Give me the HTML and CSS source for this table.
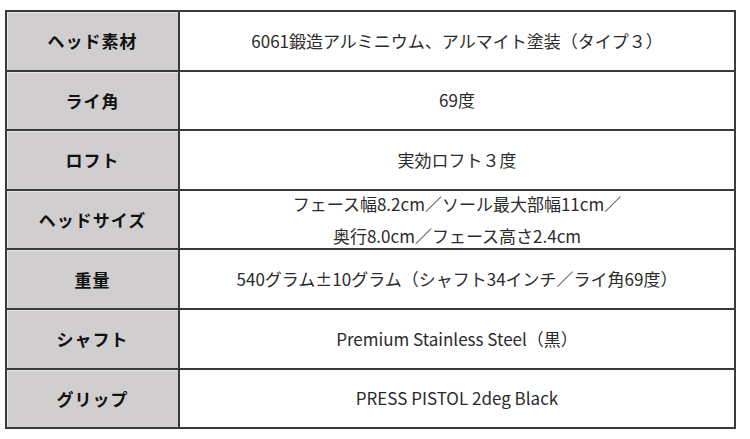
FILE: index.html
```html
<!DOCTYPE html>
<html lang="ja">
<head>
<meta charset="utf-8">
<link rel="stylesheet" href="styles.css">
</head>
<body>
<table class="spec">
  <tr><th>ヘッド素材</th><td>6061鍛造アルミニウム、アルマイト塗装（タイプ３）</td></tr>
  <tr><th>ライ角</th><td>69度</td></tr>
  <tr><th>ロフト</th><td>実効ロフト３度</td></tr>
  <tr><th>ヘッドサイズ</th><td><div class="two">フェース幅8.2cm／ソール最大部幅11cm／<br>奥行8.0cm／フェース高さ2.4cm</div></td></tr>
  <tr><th>重量</th><td>540グラム±10グラム（シャフト34インチ／ライ角69度）</td></tr>
  <tr><th>シャフト</th><td>Premium Stainless Steel（黒）</td></tr>
  <tr><th>グリップ</th><td>PRESS PISTOL 2deg Black</td></tr>
</table>
</body>
</html>
```
FILE: styles.css
```css
html, body {
  margin: 0;
  padding: 0;
  background: #ffffff;
}
body {
  padding: 10px 0 0 5px;
  font-family: "Noto Sans CJK JP", "Noto Sans", sans-serif;
}
.spec {
  border-collapse: collapse;
  width: 731px;
  table-layout: fixed;
}
.spec tr {
  height: 59.6px;
}
.spec th,
.spec td {
  border: 2px solid #3a3a3a;
  padding: 0;
  text-align: center;
  vertical-align: middle;
}
.spec th {
  width: 171px;
  background: #d0cece;
  color: #111;
  font-weight: 700;
  font-size: 17px;
  letter-spacing: 1px;
  box-shadow: inset 1px 1px 0 #e6e4e4;
}
.spec td {
  color: #2b2b2b;
  font-size: 17px;
  font-weight: 400;
  line-height: 24px;
}
.two {
  line-height: 32px;
  margin: -6px 0;
}
```
